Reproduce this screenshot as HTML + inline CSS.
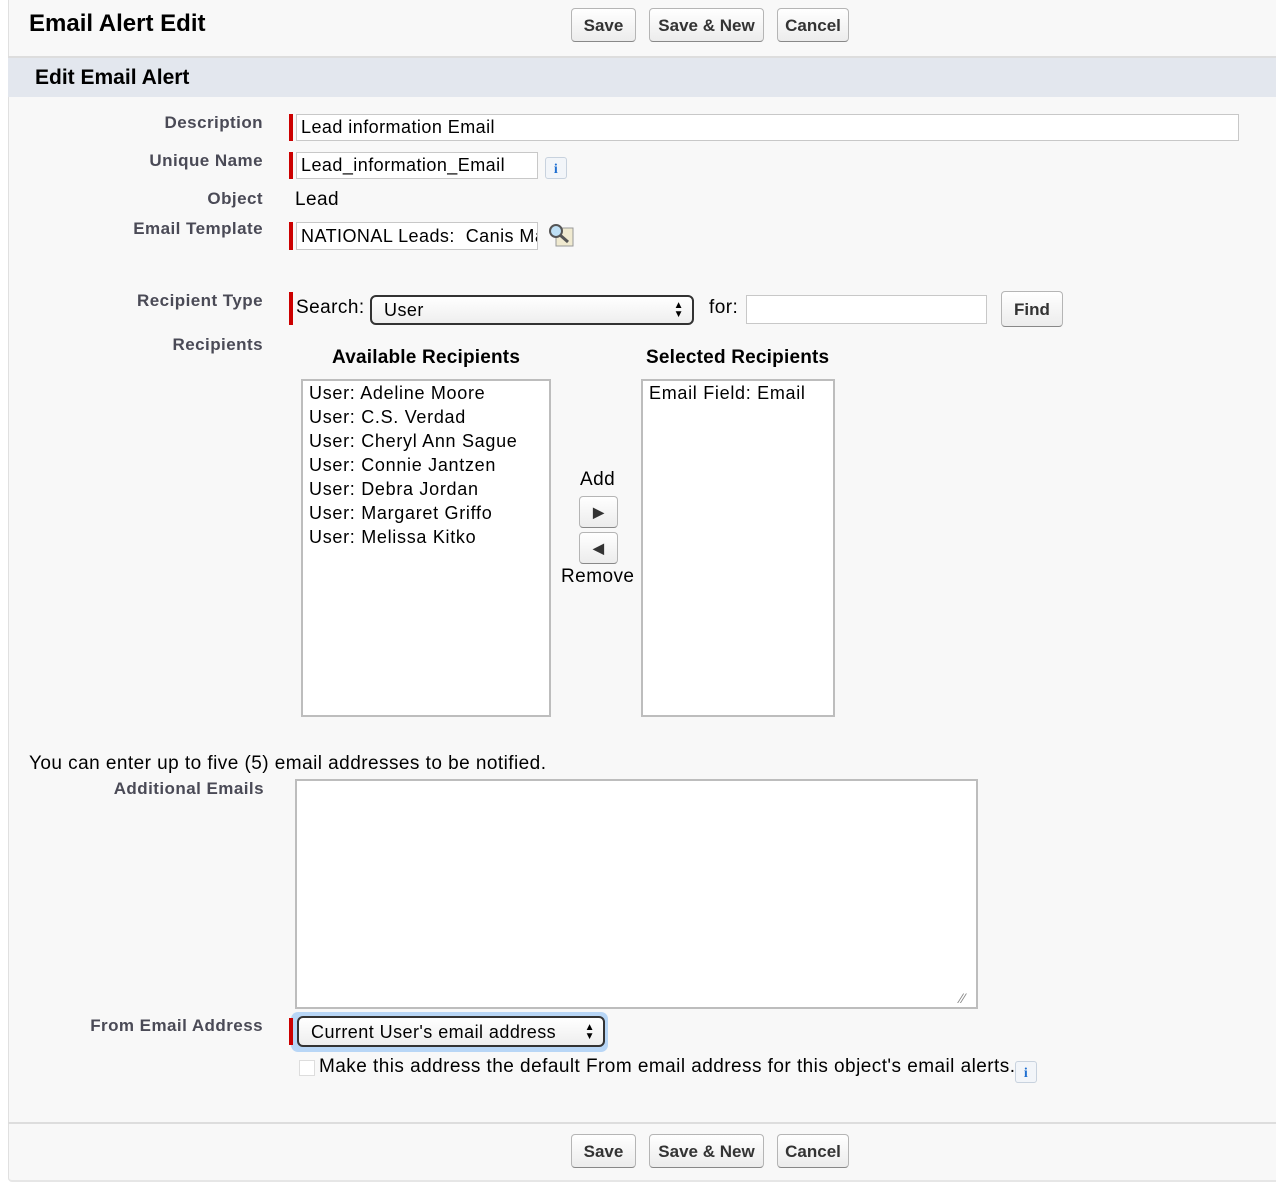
<!DOCTYPE html>
<html><head><style>
body{margin:0;width:1276px;height:1200px;background:#fff;font-family:"Liberation Sans",sans-serif;position:relative;overflow:hidden;letter-spacing:0.45px}
.a{position:absolute}
.panel{left:8px;top:0;width:1268px;height:1180px;background:#f8f8f8;border-left:1px solid #e0e0e0;border-bottom:2px solid #e6e6e6;border-radius:0 0 0 4px}
.btn{position:absolute;height:34px;border:1px solid #b5b5b5;border-bottom-color:#888;border-radius:4px;background:linear-gradient(#fff,#ececec);font-weight:bold;font-size:17px;color:#333;line-height:34px;text-align:center;box-sizing:border-box;letter-spacing:0}
.lbl{position:absolute;right:1013px;font-weight:bold;font-size:17px;color:#4a4a56;text-align:right;white-space:nowrap}
.req{position:absolute;width:4px;background:#c00}
.inp{position:absolute;background:#fff;border:1px solid #c8c8c8;box-sizing:border-box;font-size:18px;color:#000;padding-left:4px;white-space:nowrap;overflow:hidden}
.t{position:absolute;font-size:19px;color:#000;white-space:nowrap}
.info{position:absolute;width:22px;height:22px;border:1px solid #c8d2de;border-radius:3px;background:#f2f5f9;color:#1f6fd1;font:bold 14px "Liberation Serif",serif;text-align:center;line-height:24px;box-sizing:border-box}
.list{position:absolute;background:#fff;border:2px solid #bdbdbd;box-sizing:border-box;font-size:18px;line-height:24px;padding:0 6px;letter-spacing:0.7px}
.sel{position:absolute;border:2px solid #333;border-radius:6px;background:linear-gradient(#fff,#eee);box-sizing:border-box;font-size:18px;padding-left:12px}
.arr{position:absolute;right:8px;top:4px;font-size:10px;line-height:9px}
</style></head><body>
<div class="a panel"></div>
<div class="a" style="left:8px;top:56px;width:1268px;height:2px;background:#ddd"></div>
<div class="a" style="left:8px;top:58px;width:1268px;height:39px;background:#e3e7ee"></div>
<div class="a" style="left:29px;top:10px;font-size:24px;font-weight:bold;color:#000;letter-spacing:0">Email Alert Edit</div>
<div class="btn" style="left:571px;top:8px;width:65px">Save</div>
<div class="btn" style="left:649px;top:8px;width:115px">Save &amp; New</div>
<div class="btn" style="left:777px;top:8px;width:72px">Cancel</div>
<div class="a" style="left:35px;top:66px;font-size:21px;font-weight:bold;letter-spacing:0">Edit Email Alert</div>

<div class="lbl" style="top:113px">Description</div>
<div class="req" style="left:289px;top:114px;height:27px"></div>
<div class="inp" style="left:296px;top:114px;width:943px;height:27px;line-height:25px">Lead information Email</div>
<div class="lbl" style="top:151px">Unique Name</div>
<div class="req" style="left:289px;top:152px;height:27px"></div>
<div class="inp" style="left:296px;top:152px;width:242px;height:27px;line-height:25px">Lead_information_Email</div>
<div class="info" style="left:545px;top:157px">i</div>
<div class="lbl" style="top:189px">Object</div>
<div class="t" style="left:295px;top:189px">Lead</div>
<div class="lbl" style="top:219px">Email Template</div>
<div class="req" style="left:289px;top:222px;height:28px"></div>
<div class="inp" style="left:296px;top:222px;width:242px;height:28px;line-height:26px">NATIONAL Leads:&nbsp; Canis Major</div>
<svg class="a" style="left:546px;top:222px" width="30" height="26" viewBox="0 0 30 26"><rect x="10" y="6" width="17" height="18" fill="#f0ead0" stroke="#999"/><circle cx="10" cy="9" r="6" fill="#bfe0f5" stroke="#555" stroke-width="2"/><line x1="14" y1="13" x2="22" y2="20" stroke="#555" stroke-width="3"/></svg>

<div class="lbl" style="top:291px">Recipient Type</div>
<div class="req" style="left:289px;top:292px;height:33px"></div>
<div class="t" style="left:296px;top:297px">Search:</div>
<div class="sel" style="left:370px;top:295px;width:324px;height:30px;line-height:27px">User<span class="arr">▲<br>▼</span></div>
<div class="t" style="left:709px;top:297px">for:</div>
<div class="inp" style="left:746px;top:295px;width:241px;height:29px"></div>
<div class="btn" style="left:1001px;top:291px;width:62px;height:36px;line-height:36px">Find</div>

<div class="lbl" style="top:335px">Recipients</div>
<div class="a" style="left:332px;top:347px;font-size:19px;font-weight:bold;letter-spacing:0.2px">Available Recipients</div>
<div class="a" style="left:646px;top:347px;font-size:19px;font-weight:bold;letter-spacing:0.2px">Selected Recipients</div>
<div class="list" style="left:301px;top:379px;width:250px;height:338px">User: Adeline Moore<br>User: C.S. Verdad<br>User: Cheryl Ann Sague<br>User: Connie Jantzen<br>User: Debra Jordan<br>User: Margaret Griffo<br>User: Melissa Kitko</div>
<div class="list" style="left:641px;top:379px;width:194px;height:338px">Email Field: Email</div>
<div class="t" style="left:580px;top:469px">Add</div>
<div class="btn" style="left:579px;top:496px;width:39px;height:32px;font-size:14px;line-height:30px">&#9654;</div>
<div class="btn" style="left:579px;top:532px;width:39px;height:32px;font-size:14px;line-height:30px">&#9664;</div>
<div class="t" style="left:561px;top:566px">Remove</div>

<div class="t" style="left:29px;top:753px">You can enter up to five (5) email addresses to be notified.</div>
<div class="lbl" style="top:779px;right:1012px">Additional Emails</div>
<div class="a" style="left:295px;top:779px;width:683px;height:230px;background:#fff;border:2px solid #bdbdbd;box-sizing:border-box"></div>
<div class="a" style="left:960px;top:990px;color:#888;font-size:14px">⁄⁄</div>

<div class="lbl" style="top:1016px">From Email Address</div>
<div class="a" style="left:291px;top:1012px;width:317px;height:40px;background:#b8d6f6;border-radius:7px"></div>
<div class="req" style="left:289px;top:1018px;height:27px"></div>
<div class="sel" style="left:297px;top:1016px;width:308px;height:31px;line-height:28px">Current User's email address<span class="arr" style="top:5px">▲<br>▼</span></div>
<div class="a" style="left:299px;top:1060px;width:14px;height:14px;background:#fff;border:1px solid #ddd"></div>
<div class="t" style="left:319px;top:1056px">Make this address the default From email address for this object's email alerts.</div>
<div class="info" style="left:1015px;top:1061px">i</div>

<div class="a" style="left:8px;top:1122px;width:1268px;height:2px;background:#ddd"></div>
<div class="btn" style="left:571px;top:1134px;width:65px">Save</div>
<div class="btn" style="left:649px;top:1134px;width:115px">Save &amp; New</div>
<div class="btn" style="left:777px;top:1134px;width:72px">Cancel</div>
</body></html>
